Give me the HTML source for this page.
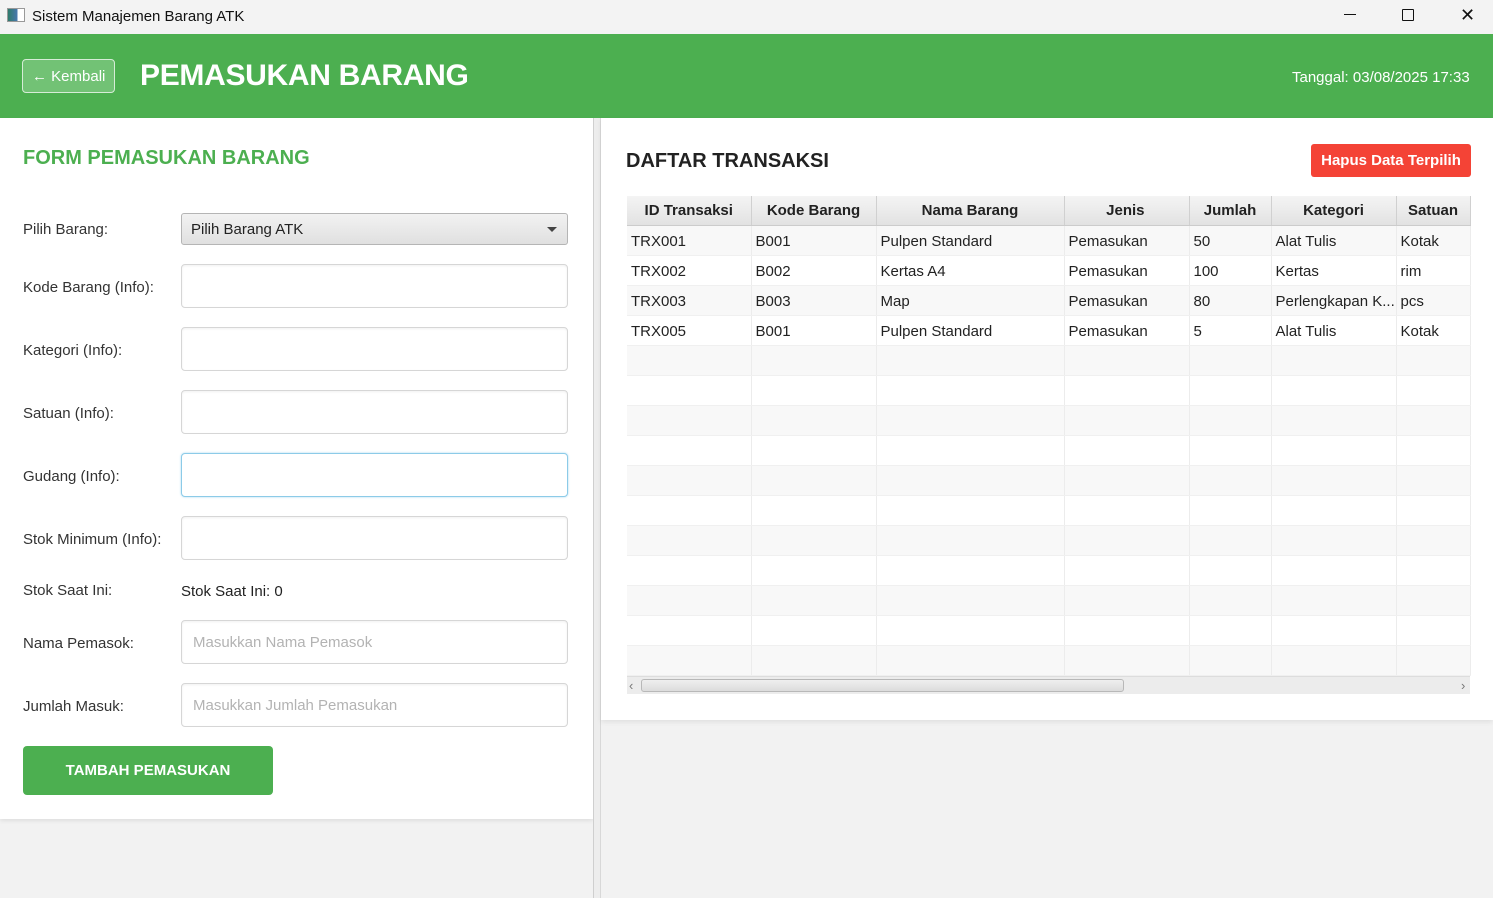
<!DOCTYPE html>
<html><head><meta charset="utf-8"><style>
*{box-sizing:border-box;margin:0;padding:0}
body{width:1493px;height:898px;background:#f2f2f2;font-family:"Liberation Sans",sans-serif;position:relative;overflow:hidden;color:#333}
.a{position:absolute}
.tb{left:0;top:0;width:1493px;height:34px;background:#f3f3f3}
.hd{left:0;top:34px;width:1493px;height:84px;background:#4caf50}
.lbl{position:absolute;left:23px;font-size:15px;color:#333}
.inp{position:absolute;left:181px;width:387px;height:44px;background:#fff;border:1px solid #d6d6d6;border-radius:4px;box-shadow:inset 0 1px 2px rgba(0,0,0,.06)}
.ph{color:#b3b3b3;font-size:15px;padding:13px 0 0 11px}
table{border-collapse:collapse;font-size:15px;table-layout:fixed}
td,th{height:30px;padding:0 4px;white-space:nowrap;overflow:hidden;border-right:1px solid #ececec}
th{height:29px;font-weight:bold;color:#222;background:linear-gradient(#f4f4f4,#e2e2e2);border-right:1px solid #d0d0d0;border-bottom:1px solid #ccc;text-align:center}
tr:nth-child(even) td{background:#f8f8f8}
td{color:#222;border-bottom:1px solid #f0f0f0;padding-top:2px}
</style></head><body>
<div class="a tb"></div>
<div class="a" style="left:7px;top:8px;width:18px;height:14px;border:1px solid #999;background:linear-gradient(90deg,#2f7a6a,#4a78b0 60%,#fff 60%)"></div>
<div class="a" style="left:32px;top:8px;font-size:15px;color:#111">Sistem Manajemen Barang ATK</div>
<div class="a" style="left:1344px;top:14px;width:12px;height:1px;background:#111"></div>
<div class="a" style="left:1402px;top:9px;width:12px;height:12px;border:1px solid #111;border-radius:1px"></div>
<div class="a" style="left:1460px;top:8px;font-size:18px;color:#111;line-height:14px">✕</div>
<div class="a hd"></div>
<div class="a" style="left:22px;top:59px;width:93px;height:34px;border:1.5px solid #d6ecd7;border-radius:4px;background:#72c275;color:#fff;font-size:15px;padding:8px 0 0 9px">← Kembali</div>
<div class="a" style="left:140px;top:59px;color:#fff;font-size:30px;font-weight:bold;letter-spacing:-0.3px">PEMASUKAN BARANG</div>
<div class="a" style="left:1292px;top:69px;color:#fff;font-size:15px">Tanggal: 03/08/2025 17:33</div>

<div class="a" style="left:0;top:118px;width:593px;height:701px;background:#fff;box-shadow:0 2px 4px rgba(0,0,0,.08)"></div>
<div class="a" style="left:593px;top:118px;width:8px;height:780px;background:#ededed;border-left:1px solid #cfcfcf;border-right:1px solid #d8d8d8"></div>
<div class="a" style="left:601px;top:118px;width:892px;height:602px;background:#fff;box-shadow:0 2px 5px rgba(0,0,0,.08)"></div>

<div class="a" style="left:23px;top:147px;color:#4caf50;font-size:20px;font-weight:bold">FORM PEMASUKAN BARANG</div>
<div class="lbl" style="top:221px">Pilih Barang:</div>
<div class="a" style="left:181px;top:213px;width:387px;height:32px;border:1px solid #b5b5b5;border-radius:3px;background:linear-gradient(#f2f2f2,#e0e0e0);font-size:15px;padding:7px 0 0 9px;color:#222">Pilih Barang ATK<span style="position:absolute;right:10px;top:13px;border-left:5px solid transparent;border-right:5px solid transparent;border-top:5px solid #444"></span></div>
<div class="lbl" style="top:279px">Kode Barang (Info):</div><div class="inp" style="top:264px"></div>
<div class="lbl" style="top:342px">Kategori (Info):</div><div class="inp" style="top:327px"></div>
<div class="lbl" style="top:405px">Satuan (Info):</div><div class="inp" style="top:390px"></div>
<div class="lbl" style="top:468px">Gudang (Info):</div><div class="inp" style="top:453px;border:1.5px solid #8ccbe8;box-shadow:0 0 2px #a8d8ef"></div>
<div class="lbl" style="top:531px">Stok Minimum (Info):</div><div class="inp" style="top:516px"></div>
<div class="lbl" style="top:582px">Stok Saat Ini:</div>
<div class="a" style="left:181px;top:583px;font-size:15px;color:#222">Stok Saat Ini: 0</div>
<div class="lbl" style="top:635px">Nama Pemasok:</div><div class="inp ph" style="top:620px">Masukkan Nama Pemasok</div>
<div class="lbl" style="top:698px">Jumlah Masuk:</div><div class="inp ph" style="top:683px">Masukkan Jumlah Pemasukan</div>
<div class="a" style="left:23px;top:746px;width:250px;height:49px;background:#4caf50;border-radius:4px;color:#fff;font-weight:bold;font-size:15px;text-align:center;padding-top:16px">TAMBAH PEMASUKAN</div>

<div class="a" style="left:626px;top:150px;font-size:20px;font-weight:bold;color:#222">DAFTAR TRANSAKSI</div>
<div class="a" style="left:1311px;top:144px;width:160px;height:33px;background:#f44336;border-radius:3px;color:#fff;font-weight:bold;font-size:15px;text-align:center;padding-top:8px">Hapus Data Terpilih</div>

<table class="a" style="left:627px;top:196px;width:843px">
<colgroup><col style="width:124px"><col style="width:125px"><col style="width:188px"><col style="width:125px"><col style="width:82px"><col style="width:125px"><col style="width:74px"></colgroup>
<tr><th>ID Transaksi</th><th>Kode Barang</th><th>Nama Barang</th><th style="text-align:right;padding-right:44px">Jenis</th><th>Jumlah</th><th>Kategori</th><th>Satuan</th></tr>
<tr><td>TRX001</td><td>B001</td><td>Pulpen Standard</td><td>Pemasukan</td><td>50</td><td>Alat Tulis</td><td>Kotak</td></tr>
<tr><td>TRX002</td><td>B002</td><td>Kertas A4</td><td>Pemasukan</td><td>100</td><td>Kertas</td><td>rim</td></tr>
<tr><td>TRX003</td><td>B003</td><td>Map</td><td>Pemasukan</td><td>80</td><td>Perlengkapan K...</td><td>pcs</td></tr>
<tr><td>TRX005</td><td>B001</td><td>Pulpen Standard</td><td>Pemasukan</td><td>5</td><td>Alat Tulis</td><td>Kotak</td></tr>
<tr><td></td><td></td><td></td><td></td><td></td><td></td><td></td></tr>
<tr><td></td><td></td><td></td><td></td><td></td><td></td><td></td></tr>
<tr><td></td><td></td><td></td><td></td><td></td><td></td><td></td></tr>
<tr><td></td><td></td><td></td><td></td><td></td><td></td><td></td></tr>
<tr><td></td><td></td><td></td><td></td><td></td><td></td><td></td></tr>
<tr><td></td><td></td><td></td><td></td><td></td><td></td><td></td></tr>
<tr><td></td><td></td><td></td><td></td><td></td><td></td><td></td></tr>
<tr><td></td><td></td><td></td><td></td><td></td><td></td><td></td></tr>
<tr><td></td><td></td><td></td><td></td><td></td><td></td><td></td></tr>
<tr><td></td><td></td><td></td><td></td><td></td><td></td><td></td></tr>
<tr><td></td><td></td><td></td><td></td><td></td><td></td><td></td></tr>
</table>
<div class="a" style="left:627px;top:676px;width:843px;height:18px;background:#ececec;border-top:1px solid #ddd"></div>
<div class="a" style="left:641px;top:679px;width:483px;height:13px;background:linear-gradient(#efefef,#dcdcdc);border:1px solid #b8b8b8;border-radius:3px"></div>
<div class="a" style="left:629px;top:678px;font-size:13px;color:#777">‹</div>
<div class="a" style="left:1461px;top:678px;font-size:13px;color:#777">›</div>
</body></html>
